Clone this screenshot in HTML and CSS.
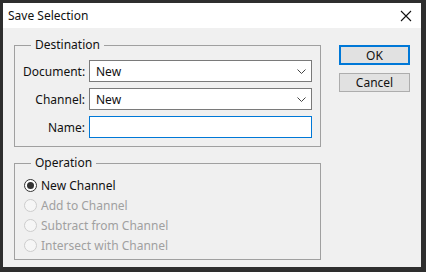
FILE: index.html
```html
<!DOCTYPE html>
<html lang="en">
<head>
  <meta charset="UTF-8">
  <title>Save Selection</title>
  <link rel="stylesheet" href="styles.css">
</head>
<body>

  <div class="dialog">
    <div class="titlebar">
      <span class="title">Save Selection</span>
      <!-- close button -->
      <svg class="close" width="12" height="12" viewBox="0 0 12 12">
        <path d="M1 1 L11 11 M11 1 L1 11" stroke="#111" stroke-width="1.1" fill="none"/>
      </svg>
    </div>

    <div class="content">
      <div class="groups">
        <div class="group destination">
          <span class="legend">Destination</span>
          <div class="form">
            <label class="label">Document:</label>
            <div class="select">
              <span>New</span>
              <svg width="9" height="5" viewBox="0 0 9 5"><path d="M0.5 0.5 L4.5 4.5 L8.5 0.5" stroke="#444" fill="none"/></svg>
            </div>
            <label class="label">Channel:</label>
            <div class="select">
              <span>New</span>
              <svg width="9" height="5" viewBox="0 0 9 5"><path d="M0.5 0.5 L4.5 4.5 L8.5 0.5" stroke="#444" fill="none"/></svg>
            </div>
            <label class="label">Name:</label>
            <div class="input"></div>
          </div>
        </div>

        <div class="group operation">
          <span class="legend">Operation</span>
          <div class="radio-row"><span class="radio checked"></span>New Channel</div>
          <div class="radio-row disabled"><span class="radio"></span>Add to Channel</div>
          <div class="radio-row disabled"><span class="radio"></span>Subtract from Channel</div>
          <div class="radio-row disabled"><span class="radio"></span>Intersect with Channel</div>
        </div>
      </div>

      <div class="buttons">
        <button class="btn default">OK</button>
        <button class="btn">Cancel</button>
      </div>
    </div>
  </div>

</body>
</html>
```

FILE: styles.css
```css
body {
  margin: 0;
  width: 426px;
  height: 272px;
  background-color: #2e2e2e;
  font-family: "Noto Sans", Arial, sans-serif;
  font-size: 12px;
  color: #111;
  overflow: hidden;
}
.dialog {
  margin: 3px 0 0 3px;
  width: 418px;
  height: 264px;
  background-color: #f0f0f0;
}
.titlebar {
  height: 25px;
  background-color: #fff;
  display: flex;
  align-items: center;
  justify-content: space-between;
  padding: 0 9px 0 5px;
}
.title {
  font-size: 12px;
}
.content {
  display: flex;
  padding: 17px 0 0 11px;
  gap: 18px;
}
.groups {
  width: 307px;
  display: flex;
  flex-direction: column;
  gap: 16px;
}
.group {
  position: relative;
  border: 1px solid #a0a0a0;
}
.legend {
  position: absolute;
  top: -9px;
  left: 16px;
  padding: 0 4px;
  background-color: #f0f0f0;
  line-height: 16px;
}
.destination {
  padding: 14px 8px 8px 8px;
}
.form {
  display: grid;
  grid-template-columns: 62px 1fr;
  column-gap: 4px;
  row-gap: 6px;
  align-items: center;
}
.label {
  text-align: right;
}
.select, .input {
  height: 20px;
  border: 1px solid #7a7a7a;
  background-color: #fff;
  display: flex;
  align-items: center;
  justify-content: space-between;
  padding: 0 5px 0 6px;
}
.input {
  border-color: #0078d7;
}
.operation {
  padding: 11px 8px 4px 9px;
}
.radio-row {
  height: 20px;
  display: flex;
  align-items: center;
  gap: 4px;
}
.radio-row.disabled {
  color: #a0a0a0;
}
.radio {
  width: 11px;
  height: 11px;
  border: 1px solid #333;
  border-radius: 50%;
  background-color: #fff;
  position: relative;
}
.radio.checked::after {
  content: "";
  position: absolute;
  left: 2px;
  top: 2px;
  width: 7px;
  height: 7px;
  border-radius: 50%;
  background-color: #333;
}
.disabled .radio {
  border-color: #cdcdcd;
  background-color: #f6f6f6;
}
.buttons {
  display: flex;
  flex-direction: column;
  gap: 8px;
}
.btn {
  width: 71px;
  height: 19px;
  padding: 0;
  font-family: inherit;
  font-size: 12px;
  background-color: #e1e1e1;
  border: 1px solid #adadad;
  color: #111;
}
.btn.default {
  border: 2px solid #0078d7;
  height: 20px;
}
```
